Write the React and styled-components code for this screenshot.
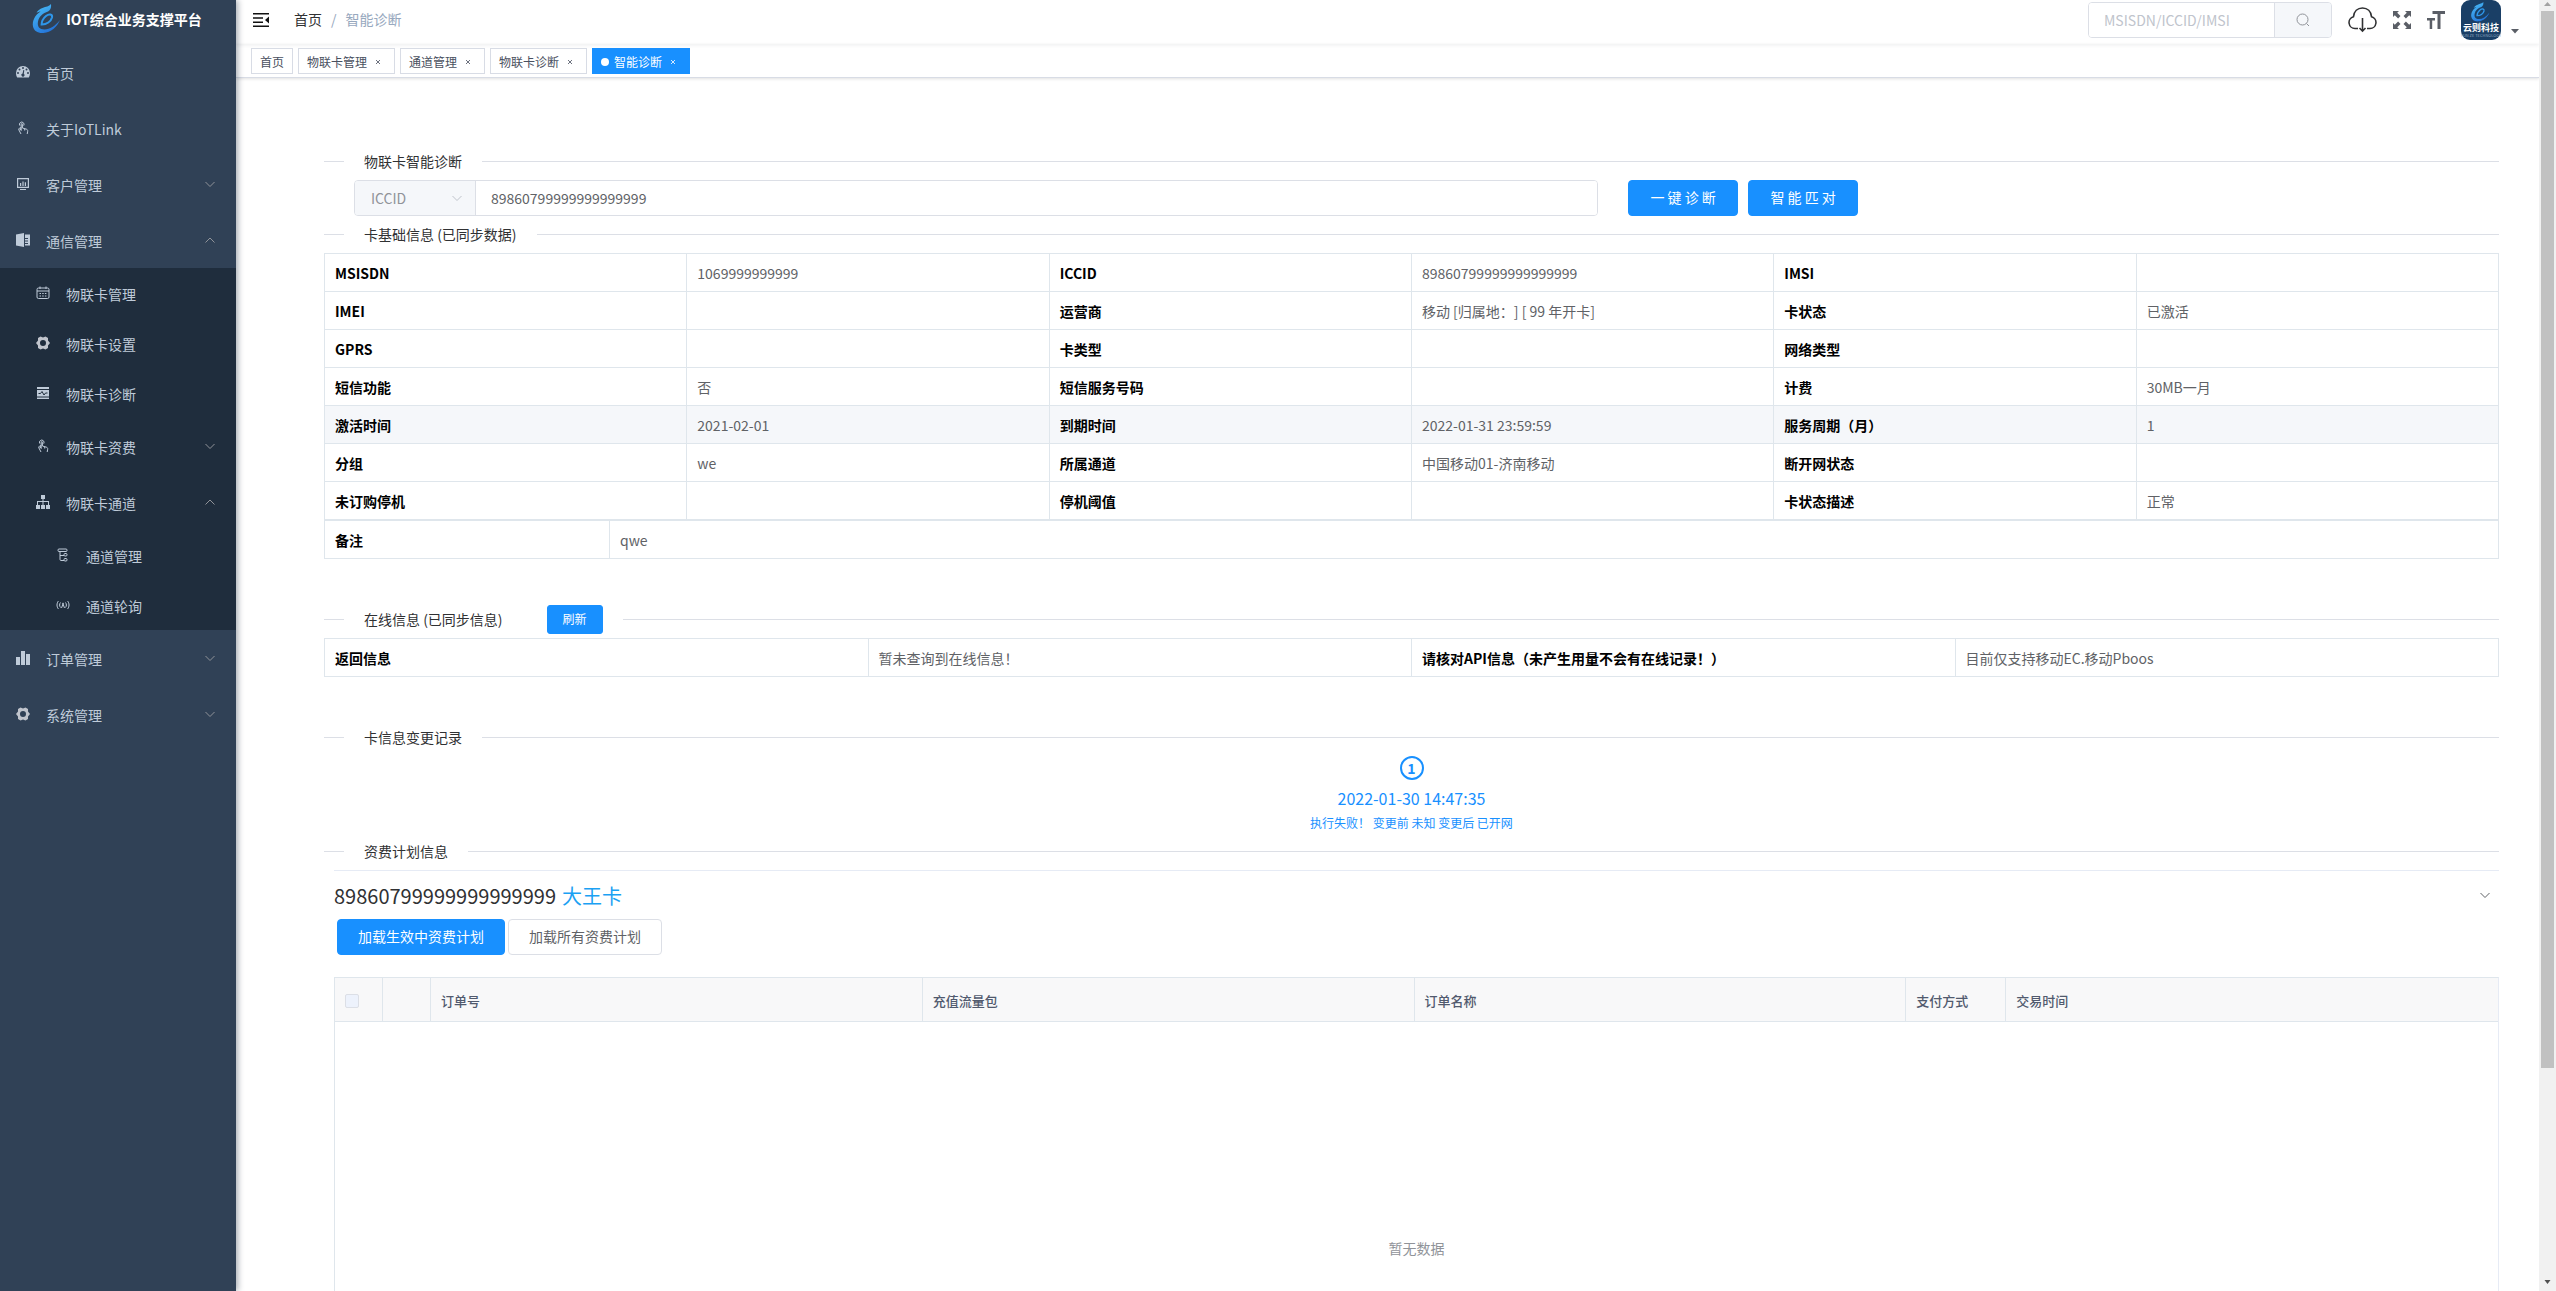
import { useState } from "react";
import styled, { createGlobalStyle } from "styled-components";

const GlobalStyle = createGlobalStyle`
  * {
    box-sizing: border-box;
  }

  body {
    margin: 0;
    background: #fff;
    color: #303133;
    font-family: "Noto Sans CJK SC", "Noto Sans", sans-serif;
    font-size: 14px;
    line-height: 20px;
    text-spacing-trim: space-all;
  }

  button, input, select {
    font-family: inherit;
  }

  a {
    color: inherit;
    text-decoration: none;
  }
`;

const Layout = styled.div`
  display: grid;
  grid-template-columns: 236px minmax(0, 1fr) 17px;
  height: 100vh;
  overflow: hidden;
`;

/* ---------- sidebar ---------- */

const Sidebar = styled.aside`
  z-index: 2;
  background: #304156;
  box-shadow: 2px 0 6px rgba(0, 21, 41, 0.35);
  overflow: hidden;
`;

const Brand = styled.a`
  display: flex;
  align-items: center;
  justify-content: center;
  gap: 6px;
  height: 44px;
  padding: 0 2px 6px 0;
  color: #fff;
  font-weight: 700;
`;

const MenuList = styled.ul`
  margin: 0;
  padding: 0;
  list-style: none;
  background: ${(props) => (props.$sub ? "#1f2d3d" : "none")};
`;

const MenuLink = styled.a`
  display: flex;
  align-items: center;
  gap: 16px;
  height: ${(props) => (props.$short ? "50px" : "56px")};
  padding: 2px 20px 0 ${(props) => 16 + props.$level * 20}px;
  color: #bfcbd9;

  & > svg {
    flex: none;
    margin-bottom: 3px;
  }
`;

const MenuText = styled.span`
  flex: 1;
`;

/* ---------- top bar ---------- */

const Main = styled.main`
  overflow-y: auto;
  scrollbar-width: none;
`;

const Navbar = styled.header`
  display: flex;
  align-items: center;
  height: 44px;
  padding: 0 19px 4px 17px;
  box-shadow: 0 1px 4px rgba(0, 21, 41, 0.08);
`;

const IconButton = styled.button`
  display: flex;
  align-items: center;
  padding: 0;
  border: none;
  background: none;
  color: #5a5e66;
`;

const Breadcrumb = styled.nav`
  display: flex;
  flex: 1;
  gap: 9px;
  padding: 0 0 3px 25px;

  span {
    color: #97a8be;
  }
`;

const SearchBox = styled.form`
  display: flex;
  height: 36px;
  width: 244px;
  border: 1px solid #dcdfe6;
  border-radius: 4px;
  overflow: hidden;

  input {
    flex: 1;
    min-width: 0;
    padding: 0 15px;
    border: none;
    font-size: 14px;
  }

  input::placeholder {
    color: #c0c4cc;
  }

  button {
    justify-content: center;
    width: 57px;
    border-left: 1px solid #dcdfe6;
    background: #f5f7fa;
    color: #909399;
  }
`;

const Tools = styled.div`
  display: flex;
  align-items: center;
  gap: 16px;
  padding-left: 16px;
`;

const UserButton = styled(IconButton)`
  align-items: flex-end;
  gap: 9px;
`;

const TagsBar = styled.nav`
  display: flex;
  gap: 5px;
  height: 34px;
  padding: 4px 15px;
  border-bottom: 1px solid #d8dce5;
  box-shadow: 0 1px 3px rgba(0, 0, 0, 0.12);
`;

const Tag = styled.a`
  display: flex;
  align-items: center;
  height: 26px;
  padding: 2px 8px 0;
  border: 1px solid ${(props) => (props.$active ? "#1890ff" : "#d8dce5")};
  background: ${(props) => (props.$active ? "#1890ff" : "#fff")};
  color: ${(props) => (props.$active ? "#fff" : "#495060")};
  font-size: 12px;
`;

const TagDot = styled.i`
  width: 8px;
  height: 8px;
  margin-right: 5px;
  border-radius: 50%;
  background: #fff;
`;

const TagClose = styled.svg`
  width: 16px;
  height: 16px;
  margin-left: 3px;
  padding: 6px;
  opacity: 0.8;
`;

/* ---------- content ---------- */

const Content = styled.div`
  padding: 65px 40px 20px 88px;
`;

const Section = styled.section`
  margin-bottom: ${(props) => (props.$spaced ? "50px" : "0")};
`;

const Divider = styled.div`
  display: flex;
  align-items: center;
  gap: 20px;
  height: 21px;
  margin: 8px 0;

  &::before,
  &::after {
    content: "";
    flex: 1;
    height: 1px;
    background: #dcdfe6;
  }

  &::before {
    flex: 0 0 20px;
  }
`;

const DividerTitle = styled.h2`
  margin: 0;
  padding-bottom: 2px;
  font-size: 14px;
  font-weight: 400;
`;

const Button = styled.button`
  height: ${(props) => (props.$small ? "29px" : "36px")};
  padding: 0 ${(props) => (props.$small ? "15px" : "20px")} 2px;
  border: 1px solid ${(props) => (props.$primary ? "#1890ff" : "#dcdfe6")};
  border-radius: ${(props) => (props.$small ? "3px" : "4px")};
  background: ${(props) => (props.$primary ? "#1890ff" : "#fff")};
  color: ${(props) => (props.$primary ? "#fff" : "#606266")};
  font-size: ${(props) => (props.$small ? "12px" : "14px")};
`;

const RefreshButton = styled(Button)`
  margin-left: 24px;
`;

const QueryForm = styled.form`
  display: flex;
  gap: 10px;
  padding-left: 30px;
`;

const QueryGroup = styled.div`
  display: flex;
  flex: 0 0 58%;
  height: 36px;
  margin-right: 20px;
  border: 1px solid #dcdfe6;
  border-radius: 4px;
  overflow: hidden;

  input {
    flex: 1;
    min-width: 0;
    padding: 0 15px;
    border: none;
    color: #606266;
    font-size: 14px;
  }
`;

const SelectWrap = styled.label`
  display: flex;
  align-items: center;
  width: 121px;
  padding-right: 12px;
  border-right: 1px solid #dcdfe6;
  background: #f5f7fa;
  color: #c0c4cc;

  select {
    flex: 1;
    height: 34px;
    padding: 0 0 0 16px;
    border: none;
    background: none;
    color: #909399;
    font-size: 14px;
    appearance: none;
  }
`;

const QueryButton = styled(Button)`
  width: 110px;
`;

const InfoTable = styled.table`
  width: 100%;
  border-spacing: 0;
  border-top: 1px solid #dfe6ec;
  border-left: 1px solid #dfe6ec;
  table-layout: fixed;

  th,
  td {
    height: 38px;
    padding: 0 10px;
    border-right: 1px solid #dfe6ec;
    border-bottom: 1px solid #dfe6ec;
    text-align: left;
  }

  th {
    width: ${(props) => props.$labelWidth || "auto"};
    color: #000;
    font-weight: 700;
  }

  td {
    color: #606266;
  }
`;

const InfoRow = styled.tr`
  background: ${(props) => (props.$hover ? "#f5f7fa" : "#fff")};
`;

const Step = styled.div`
  display: flex;
  flex-direction: column;
  align-items: center;
  color: #1890ff;
`;

const StepIcon = styled.div`
  width: 24px;
  height: 24px;
  border: 2px solid #1890ff;
  border-radius: 50%;
  font-weight: 700;
  text-align: center;
`;

const StepTitle = styled.div`
  margin-top: 6px;
  font-size: 16px;
  line-height: 24px;
`;

const StepText = styled.div`
  margin: 5px 0 2px;
  font-size: 12px;
  line-height: 16px;
`;

const Plan = styled.div`
  margin-left: 10px;
  border-top: 1px solid #e6ebf5;
`;

const PlanHeader = styled.button`
  display: flex;
  align-items: center;
  gap: 6px;
  width: 100%;
  height: 48px;
  padding: 0 8px 0 0;
  border: none;
  background: none;
  color: #303133;
  font-size: 20px;

  strong {
    font-weight: 400;
  }

  em {
    flex: 1;
    color: #1ba1f3;
    font-style: normal;
    text-align: left;
  }
`;

const PlanActions = styled.div`
  display: flex;
  gap: 3px;
  padding-left: 3px;
  margin-bottom: 22px;
`;

const OrderTable = styled.table`
  width: 100%;
  border: 1px solid #dfe6ec;
  border-right-color: #e6ebf5;
  border-spacing: 0;
  table-layout: fixed;

  th {
    height: 44px;
    padding: 3px 10px 0;
    border-right: 1px solid #dfe6ec;
    border-bottom: 1px solid #dfe6ec;
    background: #f8f8f9;
    color: #515a6e;
    font-size: 13px;
    font-weight: 500;
    text-align: left;
  }

  th:last-child {
    border-right: none;
  }

  td {
    height: 452px;
    color: #909399;
    text-align: center;
  }
`;

const CheckBox = styled.input`
  display: block;
  width: 14px;
  height: 14px;
  margin: 0;
  border: 1px solid #dcdfe6;
  border-radius: 2px;
  background: #edf2fc;
  appearance: none;
`;

/* ---------- scroll rail ---------- */

const ScrollRail = styled.div`
  display: flex;
  flex-direction: column;
  align-items: center;
  background: #f1f1f1;
`;

const ScrollThumb = styled.div`
  flex: 5;
  width: 13px;
  background: #c1c1c1;
`;

const ScrollRest = styled.div`
  flex: 1;
`;

/* ---------- icons ---------- */

const Chevron = ({ up, size = 12, color = "#909399" }) => (
  <svg width={size} height={size} viewBox="0 0 12 12" fill="none" stroke={color}>
    <path d={up ? "M1.500 8.500 6 4l4.500 4.500" : "M1.500 4 6 8.500 10.500 4"} />
  </svg>
);

const icons = {
  dashboard: (
    <path
      fillRule="evenodd"
      d="M7 1a7 7 0 0 0-7 7c0 1.700.5 3.200 1.200 4.500h11.600C13.500 11.200 14 9.700 14 8a7 7 0 0 0-7-7zM7 2a1 1 0 1 1 0 2 1 1 0 0 1 0-2zM3.500 3.500a1 1 0 1 1 0 2 1 1 0 0 1 0-2zM2 7a1 1 0 1 1 0 2 1 1 0 0 1 0-2zM10.500 3.500a1 1 0 1 1 0 2 1 1 0 0 1 0-2zM12 7a1 1 0 1 1 0 2 1 1 0 0 1 0-2zM7.300 5l1 .2-.5 3.500a1.600 1.600 0 1 1-1.200-.200z"
    />
  ),
  hand: (
    <g fill="none" stroke="currentColor" strokeWidth="1">
      <path d="M3.800 4.600a2.300 2.300 0 1 1 3.900 0" />
      <path d="M5.200 9.500V3.200a.6.600 0 0 1 1.200 0V7M6.400 7 10.500 8.200c1 .4 1.300 1 1.200 2L11.200 13M8.700 7.800V9.500M5.200 9.500 3.400 7.600M3.400 7.600c-.6-.2-1 .4-.7 1L5 13" />
      <path d="M4.300 6v3" />
    </g>
  ),
  monitor: (
    <path
      fillRule="evenodd"
      d="M1 1h12v10H1zM2.200 2.200v7.600h9.600V2.200zM4 6h1.200v3H4zM6.400 4.500h1.200V9H6.400zM8.800 5.200H10V9H8.800zM4 12h6v1H4z"
    />
  ),
  book: (
    <path
      fillRule="evenodd"
      d="M0 1.500 8 0v14l-8-1.500zM9 1.500h5v11H9V11h3v-1H9V8.500h3v-1H9V6h3V5H9z"
    />
  ),
  calendar: (
    <g fill="none" stroke="currentColor">
      <rect x="1" y="2" width="12" height="10.500" rx="1.500" />
      <path d="M1 5h12M4 .5V3M10 .5V3" />
      <path d="M3.500 7.500h7M3.500 10h7" strokeDasharray="1.500 1.200" />
    </g>
  ),
  gear: (
    <path
      fillRule="evenodd"
      fill="#c0c4cc"
      d="M4.500 0.500 7 1.500 9.500.5 12 2v2.500L14 7l-2 2.500V12l-2.500 1.500-2.500-1-2.500 1L2 12V9.500L0 7l2-2.500V2zM7 4a3 3 0 1 0 0 6 3 3 0 0 0 0-6z"
    />
  ),
  pulse: (
    <g>
      <path d="M1 1h12v12H1z" />
      <path d="M1 3.500h12M1 11h12M2.500 7.500h2L6 5.500l2 3.500 1.500-2h2" fill="none" stroke="#1f2d3d" />
    </g>
  ),
  tree: (
    <path d="M5 0h4v4H7.500v2H13v4h1v4h-4v-4h2V7H7.500v3H9v4H5v-4h1.500V7H2v3h2v4H0v-4h1V6h5.500V4H5z" />
  ),
  flow: (
    <g fill="none" stroke="currentColor">
      <rect x="2" y="1" width="9" height="2.500" rx="1" />
      <path d="M4 3.500v8c0 .6.400 1 1 1h3M4 7.500h4" />
      <rect x="8" y="5.500" width="3" height="2.500" rx="1" />
      <rect x="8" y="10.500" width="3" height="2.500" rx="1" />
    </g>
  ),
  signal: (
    <g fill="none" stroke="currentColor">
      <path d="M2.500 3C.5 5 .5 9 2.500 11M11.500 3c2 2 2 6 0 8M4.500 4.500c-1.200 1.500-1.200 3.500 0 5M9.500 4.500c1.200 1.500 1.200 3.500 0 5M5.500 10 7 6l1.500 4" />
      <circle cx="7" cy="5.500" r=".5" />
    </g>
  ),
  chart: <path d="M0 6h4v8H0zM5 0h4v14H5zM10 3h4v11h-4z" />,
};

const MenuIcon = ({ name }) => (
  <svg width="14" height="14" viewBox="0 0 14 14" fill="currentColor">
    {icons[name]}
  </svg>
);

const Swirl = () => (
  <>
    <path
      fill="url(#swirl)"
      d="M19 0c-2 2.500-5 2.500-8.500 4C8 5 5.500 6.500 4.500 9c1.500-1 3-1.500 4-1.500C3 11 0 17 1 22.500 2 27 6 29.500 11.500 29 19 28.500 25 23 28 16c-5 6-10 9.500-15.500 9.500-5 0-7.500-3-6.500-8C7 12.500 11 9 16 7.500c2-1 3.500-3 3-7.500z"
    />
    <path
      d="M10 20.500c4.500 0 9-3 10-7 .7-3.500-3-4-6-1.500-2.500 2-4.500 5.500-4.500 9.500"
      fill="none"
      stroke="#2e96ea"
      strokeWidth="2"
    />
  </>
);

const Logo = () => (
  <svg width="28" height="30" viewBox="0 0 28 30">
    <defs>
      <linearGradient id="swirl" x1="0" y1="0" x2="0.600" y2="1">
        <stop offset="0" stopColor="#4cc3fa" />
        <stop offset="1" stopColor="#2372d8" />
      </linearGradient>
    </defs>
    <Swirl />
  </svg>
);

const Avatar = () => (
  <svg width="40" height="40" viewBox="0 0 40 40">
    <rect width="40" height="40" rx="9" fill="#1a3f66" />
    <svg x="9" y="2" width="20" height="20" viewBox="0 0 28 30">
      <Swirl />
    </svg>
    <text x="20" y="31" fill="#fff" fontSize="9" fontWeight="700" textAnchor="middle">
      云则科技
    </text>
    <text x="20" y="37" fill="#8fa6bd" fontSize="4" textAnchor="middle">
      YUN ZE TECHNOLOGY
    </text>
  </svg>
);

/* ---------- data ---------- */

const menu = [
  { icon: "dashboard", text: "首页" },
  { icon: "hand", text: "关于IoTLink" },
  { icon: "monitor", text: "客户管理", children: [] },
  {
    icon: "book",
    text: "通信管理",
    open: true,
    children: [
      { icon: "calendar", text: "物联卡管理" },
      { icon: "gear", text: "物联卡设置" },
      { icon: "pulse", text: "物联卡诊断" },
      { icon: "hand", text: "物联卡资费", children: [] },
      {
        icon: "tree",
        text: "物联卡通道",
        open: true,
        children: [
          { icon: "flow", text: "通道管理" },
          { icon: "signal", text: "通道轮询" },
        ],
      },
    ],
  },
  { icon: "chart", text: "订单管理", children: [] },
  { icon: "gear", text: "系统管理", children: [] },
];

const tags = ["首页", "物联卡管理", "通道管理", "物联卡诊断", "智能诊断"];

const cardInfo = [
  ["MSISDN", "1069999999999", "ICCID", "89860799999999999999", "IMSI", ""],
  ["IMEI", "", "运营商", "移动 [归属地：] [ 99 年开卡]", "卡状态", "已激活"],
  ["GPRS", "", "卡类型", "", "网络类型", ""],
  ["短信功能", "否", "短信服务号码", "", "计费", "30MB一月"],
  ["激活时间", "2021-02-01", "到期时间", "2022-01-31 23:59:59", "服务周期（月）", "1"],
  ["分组", "we", "所属通道", "中国移动01-济南移动", "断开网状态", ""],
  ["未订购停机", "", "停机阈值", "", "卡状态描述", "正常"],
];

const onlineInfo = [
  ["返回信息", "暂未查询到在线信息！", "请核对API信息（未产生用量不会有在线记录！）", "目前仅支持移动EC.移动Pboos"],
];

const Menu = ({ items, level = 0 }) => (
  <MenuList $sub={level > 0}>
    {items.map((item) => (
      <li key={item.text}>
        <MenuLink href="#" $level={level} $short={level > 0 && !item.children}>
          <MenuIcon name={item.icon} />
          <MenuText>{item.text}</MenuText>
          {item.children && <Chevron up={item.open} />}
        </MenuLink>
        {item.open && <Menu items={item.children} level={level + 1} />}
      </li>
    ))}
  </MenuList>
);

const Info = ({ rows, labelWidth, hoverRow }) => (
  <InfoTable $labelWidth={labelWidth}>
    <tbody>
      {rows.map((row, index) => (
        <InfoRow key={row[0]} $hover={index === hoverRow}>
          {row.map((cell, i) =>
            i % 2 === 0 ? (
              <th key={i} scope="row">
                {cell}
              </th>
            ) : (
              <td key={i}>{cell}</td>
            )
          )}
        </InfoRow>
      ))}
    </tbody>
  </InfoTable>
);

const App = () => {
  const [iccid, setIccid] = useState("89860799999999999999");

  return (
    <Layout>
      <GlobalStyle />
      <Sidebar>
        <Brand href="#">
          <Logo />
          IOT综合业务支撑平台
        </Brand>
        <Menu items={menu} />
      </Sidebar>

      <Main>
        <Navbar>
          <IconButton aria-label="收起菜单">
            <svg width="16" height="16" viewBox="0 0 16 16" fill="#111">
              <path d="M0 1h16v1.500H0zM0 5.200h10v1.500H0zM0 9.400h10v1.500H0zM0 13.500h16V15H0zM16 4.500v7L12 8z" />
            </svg>
          </IconButton>
          <Breadcrumb>
            <a href="#">首页</a>
            <span>/</span>
            <span>智能诊断</span>
          </Breadcrumb>
          <SearchBox>
            <input aria-label="搜索" placeholder="MSISDN/ICCID/IMSI" />
            <IconButton type="button" aria-label="查询">
              <svg width="14" height="14" viewBox="0 0 14 14" fill="none" stroke="currentColor">
                <circle cx="6.500" cy="6.500" r="5.500" />
                <path d="M10.500 10.500 13 13" />
              </svg>
            </IconButton>
          </SearchBox>
          <Tools>
            <IconButton aria-label="下载">
              <svg width="29" height="26" viewBox="0 0 29 26" fill="none" stroke="#303133" strokeWidth="1.600">
                <path d="M10 21.500H7a6 6 0 0 1-1.500-11.800C6 4.500 9.500 1 14.500 1s8.500 3.500 9 8.700A6 6 0 0 1 22 21.500h-3" />
                <path d="M14.500 11v13M11.500 21l3 3.200 3-3.200" />
              </svg>
            </IconButton>
            <IconButton aria-label="全屏">
              <svg width="18" height="18" viewBox="0 0 18 18" fill="currentColor">
                <path d="M0 0h6L4.200 1.800 7.500 5.100 5.100 7.500 1.800 4.200 0 6zM18 0v6l-1.800-1.800-3.300 3.300-2.400-2.400 3.300-3.300L12 0zM0 18v-6l1.800 1.800 3.300-3.300 2.400 2.400-3.300 3.300L6 18zM18 18h-6l1.800-1.800-3.300-3.300 2.400-2.400 3.300 3.300L18 12z" />
              </svg>
            </IconButton>
            <IconButton aria-label="字号">
              <svg width="18" height="18" viewBox="0 0 18 18" fill="currentColor">
                <path d="M5.500 0H18v3h-4.500v15h-3V3h-5zM0 7h8v2.500H5.200V18H2.700V9.500H0z" />
              </svg>
            </IconButton>
            <UserButton aria-label="用户">
              <Avatar />
              <svg width="10" height="13" viewBox="0 0 10 13" fill="#5a5e66">
                <path d="M1 2h8L5 6.500z" />
              </svg>
            </UserButton>
          </Tools>
        </Navbar>

        <TagsBar>
          {tags.map((tag, index) => {
            const active = index === tags.length - 1;
            return (
              <Tag key={tag} href="#" $active={active}>
                {active && <TagDot />}
                {tag}
                {index > 0 && (
                  <TagClose viewBox="0 0 4 4" stroke="currentColor">
                    <path d="M0 0l4 4M4 0 0 4" />
                  </TagClose>
                )}
              </Tag>
            );
          })}
        </TagsBar>

        <Content>
          <Section>
            <Divider>
              <DividerTitle>物联卡智能诊断</DividerTitle>
            </Divider>
            <QueryForm>
              <QueryGroup>
                <SelectWrap>
                  <select aria-label="查询类型">
                    <option>ICCID</option>
                  </select>
                  <Chevron color="#c0c4cc" />
                </SelectWrap>
                <input
                  aria-label="卡号"
                  value={iccid}
                  onChange={(e) => setIccid(e.target.value)}
                />
              </QueryGroup>
              <QueryButton type="button" $primary>
                一 键 诊 断
              </QueryButton>
              <QueryButton type="button" $primary>
                智 能 匹 对
              </QueryButton>
            </QueryForm>
          </Section>

          <Section $spaced>
            <Divider>
              <DividerTitle>卡基础信息 (已同步数据)</DividerTitle>
            </Divider>
            <Info rows={cardInfo} hoverRow={4} />
            <Info rows={[["备注", "qwe"]]} labelWidth="285px" />
          </Section>

          <Section $spaced>
            <Divider>
              <DividerTitle>在线信息 (已同步信息)</DividerTitle>
              <RefreshButton $primary $small>
                刷新
              </RefreshButton>
            </Divider>
            <Info rows={onlineInfo} />
          </Section>

          <Section>
            <Divider>
              <DividerTitle>卡信息变更记录</DividerTitle>
            </Divider>
            <Step>
              <StepIcon>1</StepIcon>
              <StepTitle>2022-01-30 14:47:35</StepTitle>
              <StepText>执行失败！ 变更前 未知 变更后 已开网</StepText>
            </Step>
          </Section>

          <Section>
            <Divider>
              <DividerTitle>资费计划信息</DividerTitle>
            </Divider>
            <Plan>
              <PlanHeader>
                <strong>{iccid}</strong>
                <em>大王卡</em>
                <Chevron color="#606266" />
              </PlanHeader>
              <PlanActions>
                <Button $primary>加载生效中资费计划</Button>
                <Button>加载所有资费计划</Button>
              </PlanActions>
              <OrderTable>
                <colgroup>
                  <col width="48" />
                  <col width="48" />
                  <col />
                  <col />
                  <col />
                  <col width="100" />
                  <col />
                </colgroup>
                <thead>
                  <tr>
                    <th>
                      <CheckBox type="checkbox" aria-label="全选" disabled />
                    </th>
                    <th />
                    <th>订单号</th>
                    <th>充值流量包</th>
                    <th>订单名称</th>
                    <th>支付方式</th>
                    <th>交易时间</th>
                  </tr>
                </thead>
                <tbody>
                  <tr>
                    <td colSpan={7}>暂无数据</td>
                  </tr>
                </tbody>
              </OrderTable>
            </Plan>
          </Section>
        </Content>
      </Main>

      <ScrollRail aria-hidden="true">
        <svg width="17" height="11" viewBox="0 0 17 11">
          <path d="M5 6h7L8.500 2z" fill="#a3a3a3" />
        </svg>
        <ScrollThumb />
        <ScrollRest />
        <svg width="17" height="12" viewBox="0 0 17 12">
          <path d="M5.500 1h6l-3 4z" fill="#505050" />
        </svg>
      </ScrollRail>
    </Layout>
  );
};

export default App;
